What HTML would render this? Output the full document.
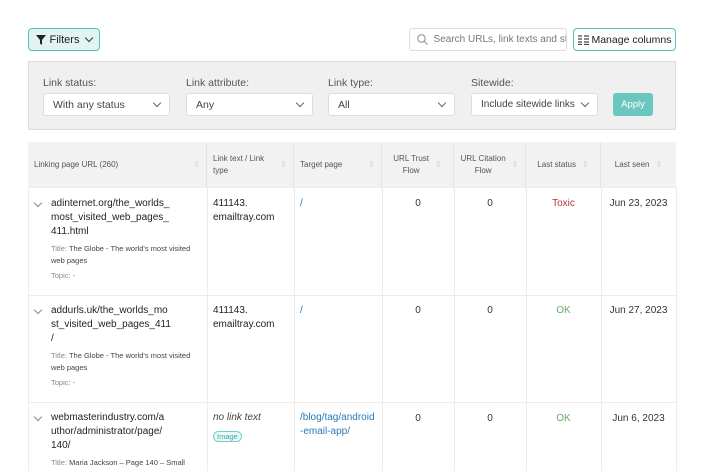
<!DOCTYPE html>
<html><head><style>
*{box-sizing:border-box;margin:0;padding:0}
body{width:704px;height:471px;overflow:hidden;background:#fff;font-family:"Liberation Sans",sans-serif;color:#333;position:relative}
.a{position:absolute;white-space:nowrap}
.btn{border:1px solid #5bbfb8;border-radius:4px;font-size:11px;display:flex;align-items:center;justify-content:center;color:#222;white-space:nowrap}
.sel{background:#fff;border:1px solid #ddd;border-radius:3px;height:23px;font-size:10.5px;padding:0 9px;display:flex;align-items:center;justify-content:space-between;color:#444;white-space:nowrap}
.lbl{font-size:10.5px;color:#555}
.chev{width:6px;height:6px;border-right:1px solid #666;border-bottom:1px solid #666;transform:rotate(45deg);margin-top:-4px;flex:none}
.th{font-size:8px;color:#555;background:#f2f2f2;display:flex;align-items:center;justify-content:center;text-align:center;line-height:12px;border-right:1px solid #e4e4e4}
.srt{color:#ccc;font-size:8px;margin-left:6px}
.vl{position:absolute;top:187px;bottom:0;width:1px;background:#ececec}
.hl{position:absolute;left:28px;width:648px;height:1px;background:#ececec}
.u{font-size:10px;line-height:14px;color:#222}
.m{font-size:7.5px;color:#888;line-height:12px;white-space:normal}
.m b{font-weight:normal;color:#444}
.n{font-size:10px;color:#333;text-align:center}
.tog{width:6px;height:6px;border-right:1px solid #888;border-bottom:1px solid #888;transform:rotate(45deg)}
</style></head><body>
<div class="a btn" style="left:28px;top:28px;width:72px;height:23px;background:#e1f3f2">
<svg width="10" height="10" viewBox="0 0 10 10"><path d="M0 0h10L6 5v5L4 8.5V5z" fill="#222"/></svg>&nbsp;Filters&nbsp;&nbsp;<span class="chev" style="border-color:#333"></span></div>
<div class="a" style="left:409px;top:28px;width:158px;height:23px;border:1px solid #ddd;border-radius:3px;font-size:10px;color:#777;display:flex;align-items:center;padding-left:7px;overflow:hidden">
<svg width="11" height="11" viewBox="0 0 11 11" style="flex:none"><circle cx="4.5" cy="4.5" r="3.7" fill="none" stroke="#888"/><path d="M7.2 7.2l3.3 3.3" stroke="#888"/></svg>&nbsp;&nbsp;Search URLs, link texts and st</div>
<div class="a btn" style="left:573px;top:28px;width:103px;height:23px;background:#fff;font-size:10.5px">
<svg width="11" height="10" viewBox="0 0 11 10"><path d="M0 1h4M0 4h4M0 7h4M0 9.5h4M6 1h5M6 4h5M6 7h5M6 9.5h5" stroke="#444" stroke-width="1.2"/></svg>&nbsp;Manage columns</div>
<div class="a" style="left:28px;top:61px;width:648px;height:69px;background:#f0f0f0;border:1px solid #ddd"></div>
<div class="a lbl" style="left:43px;top:77px">Link status:</div>
<div class="a lbl" style="left:186px;top:77px">Link attribute:</div>
<div class="a lbl" style="left:328px;top:77px">Link type:</div>
<div class="a lbl" style="left:471px;top:77px">Sitewide:</div>
<div class="a sel" style="left:43px;top:93px;width:127px">With any status<span class="chev"></span></div>
<div class="a sel" style="left:186px;top:93px;width:127px">Any<span class="chev"></span></div>
<div class="a sel" style="left:328px;top:93px;width:127px">All<span class="chev"></span></div>
<div class="a sel" style="left:471px;top:93px;width:127px;font-size:10px">Include sitewide links<span class="chev"></span></div>
<div class="a" style="left:613px;top:93px;width:40px;height:23px;background:#6cc6c0;border-radius:3px;color:#fff;font-size:9.5px;display:flex;align-items:center;justify-content:center">Apply</div>
<div class="a" style="left:28px;top:142px;height:45px;display:flex">
<div class="th" style="width:179px;justify-content:space-between;padding:0 6px">Linking page URL (260)<span class="srt">⇳</span></div>
<div class="th" style="width:87px;justify-content:space-between;padding:0 6px;text-align:left">Link text / Link<br>type<span class="srt">⇳</span></div>
<div class="th" style="width:88px;justify-content:flex-start;padding:0 6px">Target page<span class="srt" style="margin-left:auto">⇳</span></div>
<div class="th" style="width:72px">URL Trust<br>Flow<span class="srt">⇳</span></div>
<div class="th" style="width:72px">URL Citation<br>Flow<span class="srt">⇳</span></div>
<div class="th" style="width:75px">Last status<span class="srt">⇳</span></div>
<div class="th" style="width:75px;border-right:none">Last seen<span class="srt">⇳</span></div>
</div>
<div class="vl" style="left:28px"></div><div class="vl" style="left:207px"></div><div class="vl" style="left:294px"></div><div class="vl" style="left:382px"></div><div class="vl" style="left:454px"></div><div class="vl" style="left:526px"></div><div class="vl" style="left:601px"></div><div class="vl" style="left:676px"></div>
<div class="hl" style="top:187px"></div><div class="hl" style="top:295px"></div><div class="hl" style="top:402px"></div>

<div class="a tog" style="left:35px;top:200px"></div>
<div class="a" style="left:51px;top:197px;width:150px"><div class="u">adinternet.org/the_worlds_<br>most_visited_web_pages_<br>411.html</div><div class="m" style="margin-top:4px;width:150px">Title: <b>The Globe - The world's most visited web pages</b></div><div class="m" style="margin-top:3px">Topic: -</div></div>
<div class="a u" style="left:213px;top:197px">411143.<br>emailtray.com</div>
<div class="a u" style="left:300px;top:197px;color:#2a7ab8">/</div>
<div class="a n" style="left:382px;top:198px;width:72px">0</div>
<div class="a n" style="left:454px;top:198px;width:72px">0</div>
<div class="a n" style="left:526px;top:198px;width:75px;color:#b33">Toxic</div>
<div class="a n" style="left:601px;top:198px;width:75px">Jun 23, 2023</div>

<div class="a tog" style="left:35px;top:307px"></div>
<div class="a" style="left:51px;top:304px;width:150px"><div class="u">addurls.uk/the_worlds_mo<br>st_visited_web_pages_411<br>/</div><div class="m" style="margin-top:4px;width:150px">Title: <b>The Globe - The world's most visited web pages</b></div><div class="m" style="margin-top:3px">Topic: -</div></div>
<div class="a u" style="left:213px;top:304px">411143.<br>emailtray.com</div>
<div class="a u" style="left:300px;top:304px;color:#2a7ab8">/</div>
<div class="a n" style="left:382px;top:305px;width:72px">0</div>
<div class="a n" style="left:454px;top:305px;width:72px">0</div>
<div class="a n" style="left:526px;top:305px;width:75px;color:#6a6">OK</div>
<div class="a n" style="left:601px;top:305px;width:75px">Jun 27, 2023</div>

<div class="a tog" style="left:35px;top:414px"></div>
<div class="a" style="left:51px;top:411px;width:150px"><div class="u">webmasterindustry.com/a<br>uthor/administrator/page/<br>140/</div><div class="m" style="margin-top:4px;width:150px">Title: <b>Maria Jackson – Page 140 – Small</b></div></div>
<div class="a u" style="left:213px;top:411px;font-style:italic;color:#444">no link text</div>
<div class="a" style="left:213px;top:431px;font-size:7.5px;color:#3a9;border:1px solid #7cc;border-radius:7px;padding:0 3px;background:#eefaf9">Image</div>
<div class="a u" style="left:300px;top:411px;color:#2a7ab8">/blog/tag/android<br>-email-app/</div>
<div class="a n" style="left:382px;top:413px;width:72px">0</div>
<div class="a n" style="left:454px;top:413px;width:72px">0</div>
<div class="a n" style="left:526px;top:413px;width:75px;color:#6a6">OK</div>
<div class="a n" style="left:601px;top:413px;width:75px">Jun 6, 2023</div>
</body></html>
